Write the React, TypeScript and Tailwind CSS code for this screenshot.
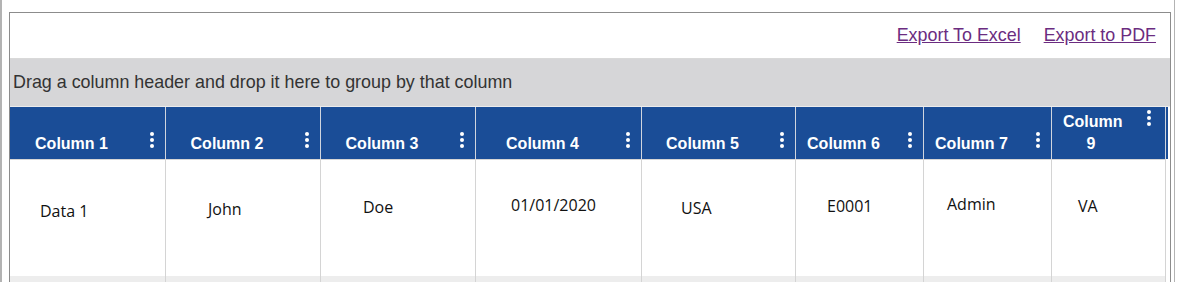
import React from "react";

type Col = {
  label: string;
  value: string;
  width: string;
  head: string;
  cell: string;
};

const columns: Col[] = [
  { label: "Column 1", value: "Data 1", width: "w-[156px]", head: "pl-[11px] pr-[43px]", cell: "pl-[30px] pt-[40px]" },
  { label: "Column 2", value: "John", width: "w-[155px]", head: "pl-[11px] pr-[43px]", cell: "pl-[42px] pt-[38px]" },
  { label: "Column 3", value: "Doe", width: "w-[155px]", head: "pl-[11px] pr-[43px]", cell: "pl-[42px] pt-[36px]" },
  { label: "Column 4", value: "01/01/2020", width: "w-[166px]", head: "pl-[11px] pr-[43px]", cell: "pl-[35px] pt-[34px]" },
  { label: "Column 5", value: "USA", width: "w-[154px]", head: "pl-[11px] pr-[43px]", cell: "pl-[39px] pt-[37px]" },
  { label: "Column 6", value: "E0001", width: "w-[128px]", head: "pl-[11px] pr-[43px]", cell: "pl-[31px] pt-[35px]" },
  { label: "Column 7", value: "Admin", width: "w-[128px]", head: "pl-[11px] pr-[43px]", cell: "pl-[23px] pt-[33px]" },
  { label: "Column 9", value: "VA", width: "w-[114px]", head: "pl-[11px] pr-[46px]", cell: "pl-[26px] pt-[35px]" },
];

function Kebab() {
  return (
    <svg width="4" height="16" viewBox="0 0 4 16" className="absolute top-[-1px] right-[-32px]" aria-hidden>
      <circle cx="2" cy="2" r="2" fill="#fff" />
      <circle cx="2" cy="8" r="2" fill="#fff" />
      <circle cx="2" cy="14" r="2" fill="#fff" />
    </svg>
  );
}

export default function App() {
  return (
    <div className="w-[1180px] h-[282px] overflow-hidden bg-white">
      <div className="w-[1175px] h-[282px] border-l-2 border-r border-[#b3b3b3] pl-[7px] pt-[12px]">
        <div className="w-[1162px] h-[400px] border border-[#8c8c8c] bg-white">
          {/* toolbar */}
          <div className="h-[46px] flex items-center justify-end gap-[23px] pr-[14px] border-b border-[#d9d9d9] font-['Liberation_Sans',Arial,sans-serif] text-[17.9px]">
            <a href="#" className="underline text-[#6b2c80]">
              Export To Excel
            </a>
            <a href="#" className="underline text-[#6b2c80]">
              Export to PDF
            </a>
          </div>

          {/* group panel */}
          <div className="h-[48px] flex items-center pl-[3px] bg-[#d6d6d8] border-b border-[#ececec] font-['Liberation_Sans',Arial,sans-serif] text-[17.9px] text-[#333]">
            Drag a column header and drop it here to group by that column
          </div>

          {/* header */}
          <div className="flex">
            <div className="flex bg-[#1a4d97] border-b border-[#d6d6d6]">
              {columns.map((c) => (
                <div
                  key={c.label}
                  className={`${c.width} ${c.head} h-[52px] flex items-end pb-[4px] border-r border-[#cfd5de] font-['Liberation_Sans',Arial,sans-serif] text-[16px] leading-[22px] font-bold text-white`}
                >
                  <div className="relative w-full text-center">
                    {c.label}
                    <Kebab />
                  </div>
                </div>
              ))}
            </div>
            <div className="w-[2px] h-[52px] bg-[#1a4d97]" />
          </div>

          {/* data row */}
          <div className="flex">
            {columns.map((c) => (
              <div
                key={c.label}
                className={`${c.width} ${c.cell} h-[116px] border-r border-[#d4d4d4] font-['Open_Sans',sans-serif] text-[16px] leading-[22px] text-[#111]`}
              >
                {c.value}
              </div>
            ))}
          </div>

          {/* next row */}
          <div className="flex">
            {columns.map((c) => (
              <div key={c.label} className={`${c.width} h-[30px] bg-[#ededed] border-r border-[#d4d4d4]`} />
            ))}
          </div>
        </div>
      </div>
    </div>
  );
}
